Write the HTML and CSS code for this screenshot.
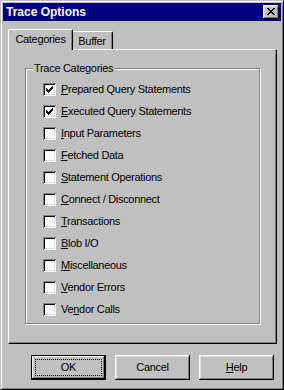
FILE: index.html
```html
<!DOCTYPE html>
<html lang="en">
<head>
  <meta charset="UTF-8" />
  <title>Trace Options</title>
  <link rel="stylesheet" href="styles.css">
</head>
<body>

<div class="window">
  <!-- title bar -->
  <div class="titlebar">
    <span class="title">Trace Options</span>
    <span class="close">
      <svg width="16" height="14" viewBox="0 0 16 14" shape-rendering="crispEdges">
        <path fill="#000" d="M4 3h2v1h-2zM10 3h2v1h-2zM5 4h2v1h-2zM9 4h2v1h-2zM6 5h4v1h-4zM7 6h2v1h-2zM6 7h4v1h-4zM5 8h2v1h-2zM9 8h2v1h-2zM4 9h2v1h-2zM10 9h2v1h-2z"/>
      </svg>
    </span>
  </div>

  <!-- tabs -->
  <div class="tabs">
    <div class="tab active">Categories</div>
    <div class="tab">Buffer</div>
  </div>

  <div class="panel">
    <div class="group">
      <span class="legend">Trace Categories</span>

      <div class="row"><span class="check"><svg width="13" height="13" viewBox="0 0 13 13" shape-rendering="crispEdges"><path fill="#000" d="M3 5h1v3h-1zM4 6h1v3h-1zM5 7h1v3h-1zM6 6h1v3h-1zM7 5h1v3h-1zM8 4h1v3h-1zM9 3h1v3h-1z"/></svg></span><span class="label"><u>P</u>repared Query Statements</span></div>
      <div class="row"><span class="check"><svg width="13" height="13" viewBox="0 0 13 13" shape-rendering="crispEdges"><path fill="#000" d="M3 5h1v3h-1zM4 6h1v3h-1zM5 7h1v3h-1zM6 6h1v3h-1zM7 5h1v3h-1zM8 4h1v3h-1zM9 3h1v3h-1z"/></svg></span><span class="label"><u>E</u>xecuted Query Statements</span></div>
      <div class="row"><span class="check"></span><span class="label"><u>I</u>nput Parameters</span></div>
      <div class="row"><span class="check"></span><span class="label"><u>F</u>etched Data</span></div>
      <div class="row"><span class="check"></span><span class="label"><u>S</u>tatement Operations</span></div>
      <div class="row"><span class="check"></span><span class="label"><u>C</u>onnect / Disconnect</span></div>
      <div class="row"><span class="check"></span><span class="label"><u>T</u>ransactions</span></div>
      <div class="row"><span class="check"></span><span class="label"><u>B</u>lob I/O</span></div>
      <div class="row"><span class="check"></span><span class="label"><u>M</u>iscellaneous</span></div>
      <div class="row"><span class="check"></span><span class="label"><u>V</u>endor Errors</span></div>
      <div class="row"><span class="check"></span><span class="label">Ve<u>n</u>dor Calls</span></div>
    </div>
  </div>

  <!-- dialog buttons -->
  <div class="buttons">
    <div class="btn default">OK</div>
    <div class="btn">Cancel</div>
    <div class="btn"><u>H</u>elp</div>
  </div>
</div>

</body>
</html>
```

FILE: styles.css
```css
html, body {
  margin: 0;
  padding: 0;
  background: #c0c0c0;
}

body {
  font-family: 'Liberation Sans', Arial, sans-serif;
  font-size: 11px;
  letter-spacing: -0.3px;
  color: #000;
}

.window {
  box-sizing: border-box;
  width: 284px;
  height: 390px;
  border: 1px solid;
  border-color: #c0c0c0 #000 #000 #c0c0c0;
  box-shadow: inset 1px 1px #fff, inset -1px -1px #808080;
  padding: 2px;
  background: #c0c0c0;
}

.titlebar {
  display: flex;
  align-items: center;
  height: 18px;
  background: #000080;
  padding: 0 2px 0 3px;
}

.title {
  flex: 1;
  color: #fff;
  font-weight: bold;
  font-size: 12px;
  letter-spacing: 0;
  line-height: 18px;
}

.close {
  display: block;
  width: 16px;
  height: 14px;
  background: #c0c0c0;
  box-shadow: inset -1px -1px #000, inset 1px 1px #fff, inset -2px -2px #808080, inset 2px 2px #dfdfdf;
}

.close svg {
  display: block;
}

/* tabs */
.tabs {
  display: flex;
  align-items: flex-end;
  margin: 8px 0 0 5px;
  height: 20px;
}

.tab {
  box-sizing: border-box;
  position: relative;
  height: 18px;
  width: 42px;
  margin-left: -2px;
  padding-top: 3px;
  line-height: 13px;
  text-align: center;
  background: #c0c0c0;
  border-left: 1px solid #fff;
  border-top: 1px solid #fff;
  border-right: 1px solid #000;
  border-radius: 2px 2px 0 0;
  box-shadow: inset -1px 0 #808080;
  z-index: 1;
}

.tab.active {
  width: 65px;
  height: 21px;
  margin-left: 0;
  margin-bottom: -1px;
  z-index: 3;
}

.panel {
  box-sizing: border-box;
  position: relative;
  z-index: 2;
  width: 269px;
  height: 295px;
  margin-left: 5px;
  padding: 18px 0 0 16px;
  border-top: 1px solid #fff;
  border-left: 1px solid #fff;
  border-right: 1px solid #000;
  border-bottom: 1px solid #000;
  box-shadow: inset -1px -1px #808080;
}

/* group box */
.group {
  box-sizing: border-box;
  position: relative;
  width: 235px;
  height: 256px;
  padding: 9px 0 0 17px;
  border: 1px solid #808080;
  box-shadow: 1px 1px #fff, inset 1px 1px #fff;
}

.legend {
  position: absolute;
  top: -7px;
  left: 7px;
  padding: 0 1px;
  line-height: 13px;
  background: #c0c0c0;
}

.row {
  display: flex;
  align-items: center;
  height: 22px;
}

.check {
  box-sizing: border-box;
  width: 13px;
  height: 13px;
  flex: none;
  background: #fff;
  box-shadow: inset 1px 1px #808080, inset -1px -1px #fff, inset 2px 2px #000, inset -2px -2px #dfdfdf;
}

.check svg {
  display: block;
}

.label {
  margin-left: 5px;
  line-height: 13px;
}

u {
  text-decoration: underline;
  text-underline-offset: 1px;
}

/* buttons */
.buttons {
  display: flex;
  justify-content: flex-end;
  gap: 9px;
  margin: 11px 7px 0 0;
}

.btn {
  box-sizing: border-box;
  position: relative;
  width: 75px;
  height: 25px;
  line-height: 25px;
  text-align: center;
  background: #c0c0c0;
  box-shadow: inset -1px -1px #000, inset 1px 1px #fff, inset -2px -2px #808080, inset 2px 2px #dfdfdf;
}

.btn.default {
  border: 1px solid #000;
  line-height: 23px;
  box-shadow: inset -1px -1px #000, inset 1px 1px #fff, inset -2px -2px #808080;
}

.btn.default::after {
  content: "";
  position: absolute;
  top: 3px;
  left: 3px;
  right: 3px;
  bottom: 3px;
  border: 1px dotted #000;
}
```
